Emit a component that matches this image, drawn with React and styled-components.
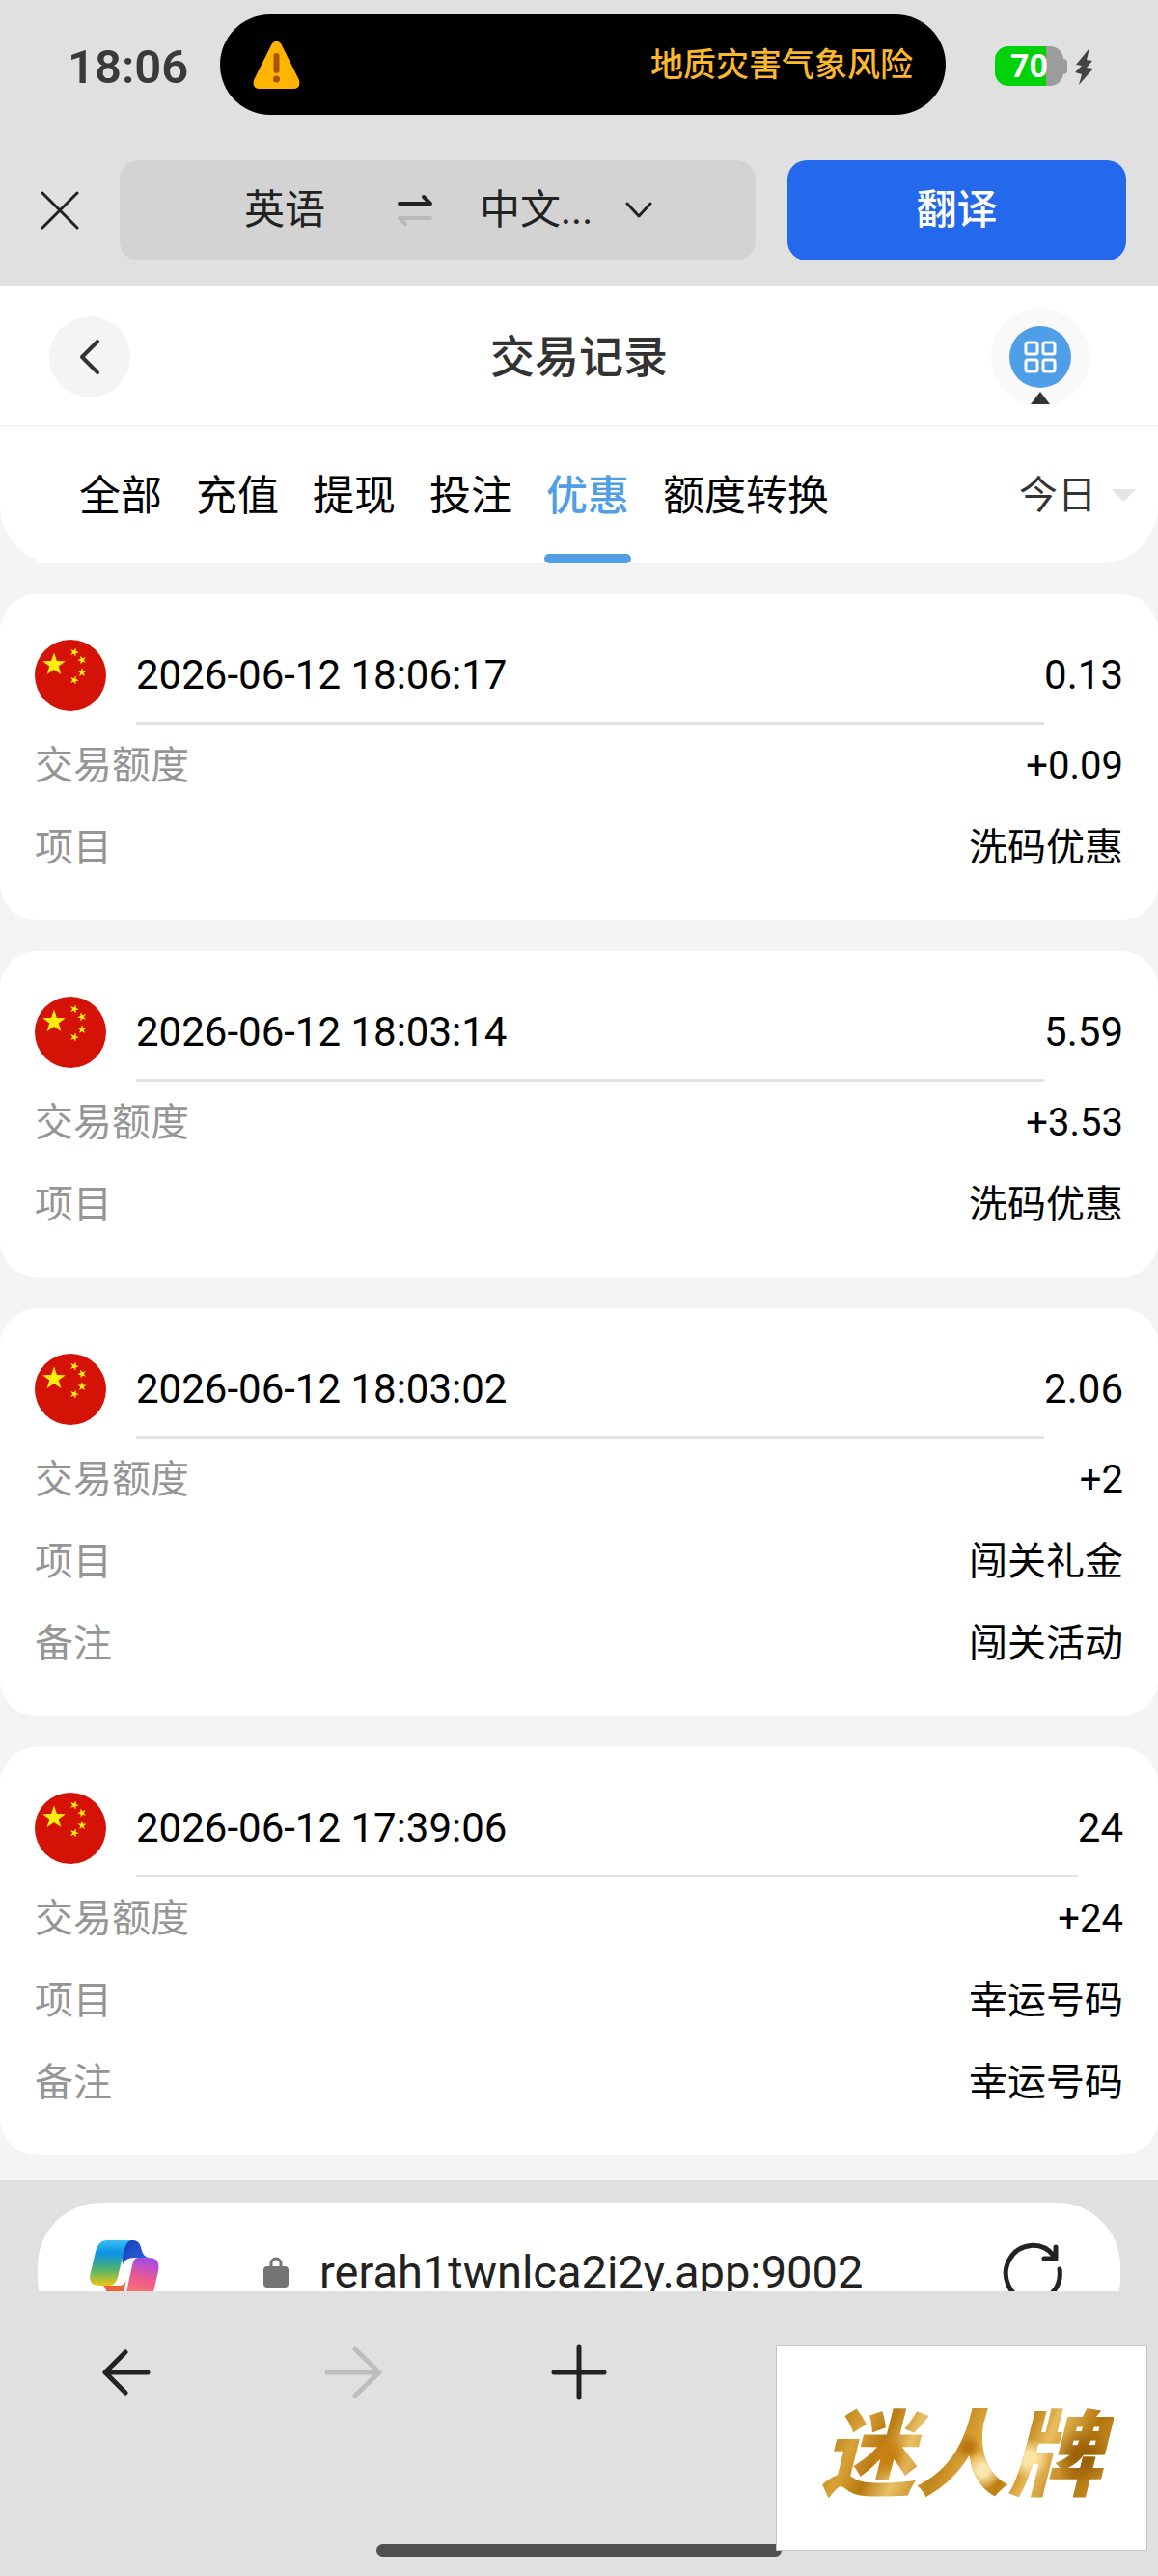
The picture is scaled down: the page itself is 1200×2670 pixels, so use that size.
import { useState } from 'react'
import styled, { createGlobalStyle } from 'styled-components'

const GlobalStyle = createGlobalStyle`
  * {
    box-sizing: border-box;
  }

  body {
    margin: 0;
    background: #e0e0e0;
    font-family: Roboto, 'Noto Sans CJK SC', sans-serif;
    font-size: 40px;
    line-height: 60px;
    color: #000;
  }

  button,
  select {
    margin: 0;
    padding: 0;
    border: none;
    background: transparent;
    font: inherit;
    color: inherit;
    cursor: pointer;
  }

  svg {
    display: block;
    flex: none;
  }
`

const Page = styled.div`
  position: relative;
  display: flex;
  flex-direction: column;
  min-height: 100vh;
`

const StatusBar = styled.header`
  display: flex;
  align-items: center;
  padding: 15px 67px 0 70px;
`

const Clock = styled.time`
  width: 158px;
  padding-top: 6px;
  font-size: 49px;
  font-weight: 600;
  color: #3a3a3a;
`

const Island = styled.div`
  flex: 1;
  display: flex;
  align-items: center;
  justify-content: space-between;
  height: 104px;
  padding: 0 34px;
  border-radius: 52px;
  background: #000;
  font-size: 34px;
  font-weight: 500;
  color: #fbb829;
`

const Power = styled.div`
  display: flex;
  align-items: center;
  gap: 8px;
  margin-left: 51px;
  padding-top: 3px;
`

const Battery = styled.div`
  display: flex;
  align-items: center;

  &::after {
    content: '';
    width: 4px;
    height: 16px;
    border-radius: 0 4px 4px 0;
    background: #9c9c9c;
  }
`

const BatteryBody = styled.div`
  width: 71px;
  height: 41px;
  border-radius: 14px;
  background: linear-gradient(to right, #00d20a 75%, #9c9c9c 75%);
  font-size: 34px;
  font-weight: 700;
  line-height: 41px;
  text-align: center;
  color: #fff;
`

const TranslateBar = styled.div`
  display: flex;
  align-items: center;
  padding: 47px 33px 26px 42px;
  color: #222;
`

const LanguageBox = styled.div`
  flex: 1 1 659px;
  display: flex;
  align-items: center;
  height: 104px;
  margin: 0 33px 0 42px;
  padding-left: 129px;
  border-radius: 20px;
  background: #d3d3d3;
  font-size: 42px;
`

const SwapButton = styled.button`
  margin: 0 48px 0 74px;
`

const TargetLanguage = styled.button`
  display: flex;
  align-items: center;
  gap: 34px;
`

const TranslateButton = styled.button`
  flex: 1 1 351px;
  height: 104px;
  border-radius: 20px;
  background: #2469eb;
  font-size: 42px;
  font-weight: 500;
  color: #fff;
`

const TitleBar = styled.div`
  display: grid;
  grid-template-columns: 1fr auto 1fr;
  align-items: center;
  height: 147px;
  padding: 4px 71px 0 51px;
  border-bottom: 3px solid #f4f4f4;
  background: #fff;
  color: #333;
`

const BackButton = styled.button`
  display: grid;
  place-items: center;
  width: 84px;
  height: 84px;
  border-radius: 50%;
  background: #f4f4f4;
`

const Title = styled.h1`
  margin: 0;
  padding-left: 20px;
  font-size: 46px;
  font-weight: 500;
`

const MenuButton = styled.button`
  position: relative;
  justify-self: end;
  display: grid;
  place-items: center;
  width: 102px;
  height: 102px;
  border-radius: 50%;
  background: #f9f9f9;

  &::after {
    content: '';
    position: absolute;
    bottom: 2px;
    border: 10px solid transparent;
    border-top: none;
    border-bottom: 13px solid #333;
  }
`

const MenuDisc = styled.span`
  display: grid;
  place-items: center;
  width: 64px;
  height: 64px;
  border-radius: 50%;
  background: #4f9ee8;
`

const Content = styled.main`
  background: #f4f4f4;
`

const FilterBar = styled.div`
  display: flex;
  justify-content: space-between;
  height: 141px;
  padding: 0 23px 0 38px;
  border-radius: 0 0 60px 60px;
  background: #fff;
`

const Tabs = styled.nav`
  display: flex;
  gap: 31px;
  padding-left: 42px;
  background: #fff;
`

const Tab = styled.button`
  position: relative;
  padding: 0 2px;
  font-size: 43px;
  font-weight: ${({ $active }) => ($active ? 500 : 400)};
  white-space: nowrap;
  color: ${({ $active }) => ($active ? '#509ee6' : '#000')};

  &::after {
    content: '';
    display: ${({ $active }) => ($active ? 'block' : 'none')};
    position: absolute;
    right: 0;
    bottom: 0;
    left: 0;
    height: 10px;
    border-radius: 5px;
    background: #509ee6;
  }
`

const Period = styled.label`
  display: flex;
  align-items: center;
  gap: 16px;

  select {
    appearance: none;
    color: #333;
  }
`

const Records = styled.div`
  display: flex;
  flex-direction: column;
  gap: 32px;
  padding: 32px 0 26px;
`

const Card = styled.article`
  padding: 33px 36px;
  border-radius: 38px;
  background: #fff;
`

const CardHead = styled.div`
  display: flex;
  align-items: center;
  height: 102px;
  font-size: 42px;
`

const Stamp = styled.time`
  flex: 1;
  align-self: stretch;
  margin-left: 31px;
  border-bottom: 3px solid #e2e2e2;
  line-height: 101px;
`

const Details = styled.dl`
  margin: 0;
`

const DetailRow = styled.div`
  display: flex;
  justify-content: space-between;
  line-height: 85px;

  dt {
    color: #959595;
  }

  dd {
    margin: 0;
  }
`

const AddressArea = styled.div`
  height: 115px;
  padding: 23px 39px 0;
  overflow: hidden;
`

const AddressBox = styled.div`
  display: flex;
  align-items: center;
  height: 144px;
  padding: 0 60px 0 54px;
  border-radius: 66px;
  background: #fff;
  color: #222;
`

const Address = styled.a`
  flex: 1;
  display: flex;
  align-items: center;
  gap: 32px;
  margin-left: 108px;
  font-size: 47px;
  text-decoration: none;
  color: inherit;
`

const NavBar = styled.nav`
  flex: 1;
  display: grid;
  grid-template-columns: repeat(5, 1fr);
  justify-items: center;
  align-items: center;
  align-content: start;
  padding: 55px 14px 0;
  color: #222;
`

const NavButton = styled.button`
  color: ${({ disabled }) => (disabled ? '#bdbdbd' : 'inherit')};
`

const HomeIndicator = styled.div`
  align-self: center;
  width: 35%;
  height: 13px;
  margin-bottom: 20px;
  border-radius: 7px;
  background: #505050;
`

const Watermark = styled.aside`
  position: absolute;
  right: 11px;
  bottom: 26px;
  display: grid;
  place-items: center;
  width: 385px;
  height: 213px;
  padding-top: 16px;
  border: 1px solid #c4c4c4;
  background: #fff;

  span {
    padding: 0 12px;
    font-size: 97px;
    font-weight: 900;
    font-style: italic;
    line-height: 120px;
    color: transparent;
    background:
      radial-gradient(circle at 26% 50%, #c98012 0 3%, transparent 9%),
      radial-gradient(circle at 57% 62%, #fbe6ae 0 3%, transparent 10%),
      radial-gradient(circle at 72% 52%, #fbe3a0 0 3%, transparent 9%),
      radial-gradient(circle at 52% 42%, #b9760f 0 2%, transparent 8%),
      radial-gradient(circle at 90% 50%, #9c620a 0 3%, transparent 10%),
      linear-gradient(115deg, #b07a12 8%, #d9a236 18%, #b87a10 26%, #e9c068 34%, #c08418 44%, #e0ab42 54%, #bd7d12 64%, #e8bd5e 72%, #b3740e 84%, #d9a63e);
    background-clip: text;
  }
`

const RECORDS = [
  { time: '2026-06-12 18:06:17', balance: '0.13', details: [['交易额度', '+0.09'], ['项目', '洗码优惠']] },
  { time: '2026-06-12 18:03:14', balance: '5.59', details: [['交易额度', '+3.53'], ['项目', '洗码优惠']] },
  {
    time: '2026-06-12 18:03:02',
    balance: '2.06',
    details: [['交易额度', '+2'], ['项目', '闯关礼金'], ['备注', '闯关活动']]
  },
  {
    time: '2026-06-12 17:39:06',
    balance: '24',
    details: [['交易额度', '+24'], ['项目', '幸运号码'], ['备注', '幸运号码']]
  }
]

const TABS = ['全部', '充值', '提现', '投注', '优惠', '额度转换']

const STAR = 'M0-10 2.35-3.24 9.51-3.09 3.8 1.24 5.88 8.09 0 4-5.88 8.09-3.8 1.24-9.51-3.09-2.35-3.24z'

function Icon({ width, height, stroke = 4, children }) {
  return (
    <svg
      width={width}
      height={height}
      viewBox={`0 0 ${width} ${height}`}
      fill="none"
      stroke="currentColor"
      strokeWidth={stroke}
      strokeLinecap="round"
      strokeLinejoin="round"
      aria-hidden="true"
    >
      {children}
    </svg>
  )
}

function WarningIcon() {
  return (
    <svg width="49" height="51" viewBox="0 0 49 51" aria-hidden="true">
      <path d="M20 3Q24.500-2 29 3L48 41Q50 50 42 50H7Q-1 50 1 41Z" fill="#ffb400" />
      <path d="M24.500 16V31" stroke="#a75400" strokeWidth="6" strokeLinecap="round" />
      <circle cx="24.500" cy="40" r="3.500" fill="#a75400" />
    </svg>
  )
}

function FlagIcon() {
  return (
    <svg width="74" height="74" viewBox="0 0 74 74" role="img" aria-label="CNY">
      <circle cx="37" cy="37" r="37" fill="#d41205" />
      <g fill="#ffee0a">
        <path d={STAR} transform="translate(20 26) scale(1.250)" />
        <path d={STAR} transform="translate(41 13) rotate(20) scale(.48)" />
        <path d={STAR} transform="translate(49 21) rotate(-20) scale(.48)" />
        <path d={STAR} transform="translate(49 34) scale(.48)" />
        <path d={STAR} transform="translate(41 42) rotate(20) scale(.48)" />
      </g>
    </svg>
  )
}

function CopilotIcon() {
  return (
    <svg width="72" height="66" viewBox="0 0 72 66" aria-hidden="true">
      <defs>
        <linearGradient id="cp-left" x1="0" y1="0" x2="0" y2="1">
          <stop offset="0" stopColor="#3cbdf5" />
          <stop offset=".28" stopColor="#0a93e6" />
          <stop offset=".65" stopColor="#52b46c" />
          <stop offset="1" stopColor="#f2c614" />
        </linearGradient>
        <linearGradient id="cp-top" x1="0" y1="0" x2="1" y2="1">
          <stop offset="0" stopColor="#1a3bb5" />
          <stop offset="1" stopColor="#2a6be6" />
        </linearGradient>
        <linearGradient id="cp-right" x1=".6" y1="0" x2=".4" y2="1">
          <stop offset="0" stopColor="#a24ae8" />
          <stop offset=".45" stopColor="#ee5a8c" />
          <stop offset="1" stopColor="#fb8a5e" />
        </linearGradient>
      </defs>
      <path d="M40 0H45Q51 0 53 7L54 11Q56 17 61 18H46Q37 18 34 25L33 14Q36 1 40 0Z" fill="url(#cp-top)" />
      <path d="M14 47H30Q36 47 38 41L34 58Q31 66 27 66H25Q20 66 18 57Q17 49 14 47Z" fill="#f0603a" />
      <path d="M17 0H43Q38 1 36 9L29 38Q27 47 20 47H10Q-3 47 1 33L6 12Q9 0 17 0Z" fill="url(#cp-left)" />
      <path d="M50 18H61Q74 18 71 32L66 54Q63 66 54 66H30Q36 64 38 54L44 26Q46 18 50 18Z" fill="url(#cp-right)" />
    </svg>
  )
}

export default function App() {
  const [tab, setTab] = useState('优惠')

  return (
    <Page>
      <GlobalStyle />
      <StatusBar>
        <Clock>18:06</Clock>
        <Island>
          <WarningIcon />
          <span>地质灾害气象风险</span>
        </Island>
        <Power>
          <Battery>
            <BatteryBody>70</BatteryBody>
          </Battery>
          <svg width="19" height="38" viewBox="0 0 19 38" fill="#444" aria-hidden="true">
            <path d="M15 0 1 17 7 18 0 25 7 27 4 38 19 21 12 20 18 13 12 12Z" />
          </svg>
        </Power>
      </StatusBar>

      <TranslateBar>
        <button type="button" aria-label="关闭">
          <Icon width={40} height={40} stroke={3}>
            <path d="M2 2 38 38M38 2 2 38" />
          </Icon>
        </button>
        <LanguageBox>
          <button type="button">英语</button>
          <SwapButton type="button" aria-label="交换">
            <svg width="38" height="34" viewBox="0 0 38 34" fill="none" strokeWidth="4" strokeLinecap="round" strokeLinejoin="round" aria-hidden="true">
              <path d="M3 10H35L28 3" stroke="#222" />
              <path d="M35 25H3L9 31" stroke="#b9b9b9" />
            </svg>
          </SwapButton>
          <TargetLanguage type="button">
            中文...
            <Icon width={28} height={18} stroke={3}>
              <path d="M2 2 14 15 26 2" />
            </Icon>
          </TargetLanguage>
        </LanguageBox>
        <TranslateButton type="button">翻译</TranslateButton>
      </TranslateBar>

      <TitleBar>
        <BackButton type="button" aria-label="返回">
          <Icon width={24} height={38} stroke={4}>
            <path d="M20 3 4 19 20 35" />
          </Icon>
        </BackButton>
        <Title>交易记录</Title>
        <MenuButton type="button" aria-label="菜单">
          <MenuDisc>
            <svg width="34" height="34" viewBox="0 0 34 34" fill="none" stroke="#fff" strokeWidth="3" aria-hidden="true">
              <rect x="2" y="2" width="12" height="12" rx="2" />
              <rect x="20" y="2" width="12" height="12" rx="2" />
              <rect x="2" y="20" width="12" height="12" rx="2" />
              <rect x="20" y="20" width="12" height="12" rx="2" />
            </svg>
          </MenuDisc>
        </MenuButton>
      </TitleBar>

      <Content>
        <FilterBar>
          <Tabs>
            {TABS.map((name) => (
              <Tab key={name} type="button" $active={name === tab} onClick={() => setTab(name)}>
                {name}
              </Tab>
            ))}
          </Tabs>
          <Period>
            <select aria-label="日期" defaultValue="今日">
              <option>今日</option>
            </select>
            <svg width="25" height="13" viewBox="0 0 25 13" fill="#e4e4e4" aria-hidden="true">
              <path d="M0 0H25L12.500 13Z" />
            </svg>
          </Period>
        </FilterBar>

        <Records>
          {RECORDS.map((record) => (
            <Card key={record.time}>
              <CardHead>
                <FlagIcon />
                <Stamp>{record.time}</Stamp>
                <span>{record.balance}</span>
              </CardHead>
              <Details>
                {record.details.map(([label, value]) => (
                  <DetailRow key={label}>
                    <dt>{label}</dt>
                    <dd>{value}</dd>
                  </DetailRow>
                ))}
              </Details>
            </Card>
          ))}
        </Records>
      </Content>

      <AddressArea>
        <AddressBox>
          <CopilotIcon />
          <Address href="#">
            <svg width="26" height="32" viewBox="0 0 26 32" aria-hidden="true">
              <path d="M8 12V7a5 5 0 0 1 10 0v5" fill="none" stroke="#747474" strokeWidth="3" />
              <rect y="10" width="26" height="22" rx="4" fill="#747474" />
            </svg>
            rerah1twnlca2i2y.app:9002
          </Address>
          <button type="button" aria-label="刷新">
            <Icon width={62} height={62} stroke={5}>
              <path d="M59 28A28 29 0 1 1 53 14M55 5V17H43" />
            </Icon>
          </button>
        </AddressBox>
      </AddressArea>

      <NavBar>
        <NavButton type="button" aria-label="后退">
          <Icon width={50} height={48} stroke={5}>
            <path d="M47 24H3M24 3 3 24 24 45" />
          </Icon>
        </NavButton>
        <NavButton type="button" aria-label="前进" disabled>
          <Icon width={60} height={54} stroke={5}>
            <path d="M3 27H57M32 3 57 27 32 51" />
          </Icon>
        </NavButton>
        <NavButton type="button" aria-label="新标签页">
          <Icon width={58} height={58} stroke={5}>
            <path d="M29 3V55M3 29H55" />
          </Icon>
        </NavButton>
        <NavButton type="button" aria-label="标签页">
          <Icon width={56} height={56} stroke={4}>
            <rect x="4" y="2" width="48" height="50" rx="8" />
          </Icon>
        </NavButton>
      </NavBar>
      <HomeIndicator />

      <Watermark>
        <span>迷人牌</span>
      </Watermark>
    </Page>
  )
}
